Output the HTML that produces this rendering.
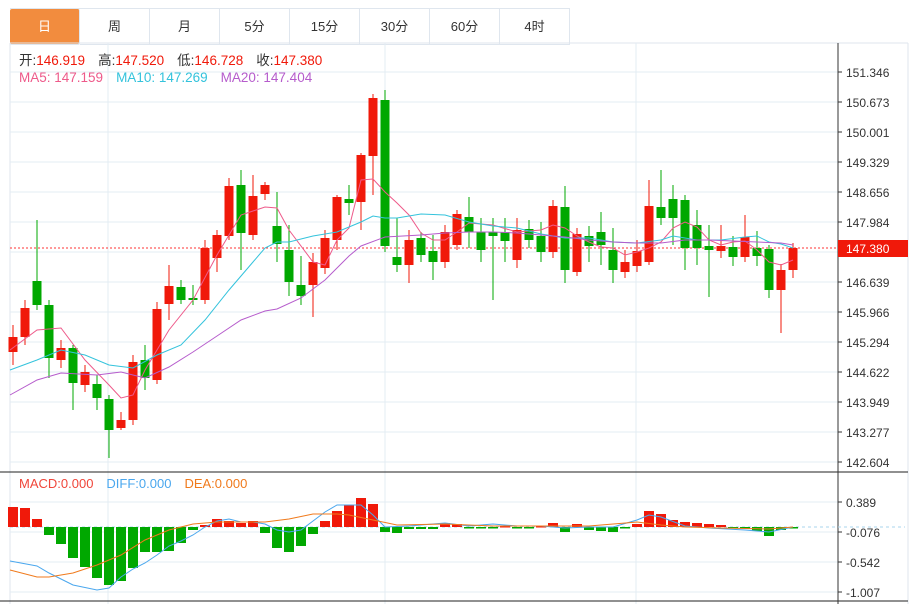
<!DOCTYPE html>
<html><head><meta charset="utf-8"><style>
body{margin:0;background:#fff;width:914px;height:604px;overflow:hidden;font-family:"Liberation Sans","Noto Sans CJK SC",sans-serif}
.tabs{position:absolute;left:10px;top:8px;height:35px;display:flex;border-top:1px solid #dfe6ee}
.tab{width:69px;height:35px;line-height:35px;text-align:center;font-size:13px;color:#333;border-right:1px solid #dfe6ee;border-bottom:1px solid #dfe6ee}
.tab.on{background:#f28c3e;color:#fff;border-radius:2px}
</style></head><body>
<div class="tabs"><div class="tab on">日</div><div class="tab">周</div><div class="tab">月</div><div class="tab">5分</div><div class="tab">15分</div><div class="tab">30分</div><div class="tab">60分</div><div class="tab">4时</div></div>
<svg id="s" width="914" height="604" style="position:absolute;left:0;top:0" font-family="Liberation Sans, Noto Sans CJK SC, sans-serif"></svg>
<script>
const s=document.getElementById('s');let h='';
h+='<line x1="10" y1="43" x2="10" y2="604" stroke="#dfe6ee"/><line x1="908" y1="43" x2="908" y2="604" stroke="#dfe6ee"/><line x1="10" y1="43" x2="908" y2="43" stroke="#dfe6ee"/>';
[72,102,132,162,192,222,252,282,312,342,372,402,432,462].forEach(y=>h+=`<line x1="10" y1="${y}" x2="838" y2="${y}" stroke="#e3ecf3"/>`);
[502,532,562,592].forEach(y=>h+=`<line x1="10" y1="${y}" x2="838" y2="${y}" stroke="#e3ecf3"/>`);
[108,385,636].forEach(x=>h+=`<line x1="${x}" y1="43" x2="${x}" y2="604" stroke="#e3ecf3"/>`);
h+='<line x1="0" y1="472" x2="908" y2="472" stroke="#222"/><line x1="0" y1="601" x2="908" y2="601" stroke="#222"/><line x1="838" y1="43" x2="838" y2="604" stroke="#333"/>';
const pl=['151.346','150.673','150.001','149.329','148.656','147.984','','146.639','145.966','145.294','144.622','143.949','143.277','142.604'];
pl.forEach((t,i)=>{if(t){const y=72+i*30;h+=`<line x1="838" y1="${y}" x2="842" y2="${y}" stroke="#333"/><text x="846" y="${y+5}" font-size="12" fill="#333">${t}</text>`}});
[['0.389',502],['-0.076',532],['-0.542',562],['-1.007',592]].forEach(a=>h+=`<line x1="838" y1="${a[1]}" x2="842" y2="${a[1]}" stroke="#333"/><text x="846" y="${a[1]+5}" font-size="12" fill="#333">${a[0]}</text>`);
h+='<line x1="10" y1="248" x2="838" y2="248" stroke="#f33" stroke-dasharray="2,2"/><rect x="838" y="240" width="70" height="17" fill="#f0190a"/><text x="846" y="253" font-size="12" fill="#fff">147.380</text>';
h+='<line x1="10" y1="527" x2="838" y2="527" stroke="#a9d4ec" stroke-dasharray="3,3"/>';
const R='#f0190a',G='#00a800';
const c=[[1,337,352,325,365],[1,308,337,300,345],[0,281,305,220,310],[0,305,358,300,378],[1,348,360,340,368],[0,348,383,345,410],[1,372,385,365,392],[0,384,398,375,410],[0,399,430,395,458],[1,420,428,412,430],[1,362,420,355,425],[0,360,378,345,390],[1,309,380,302,384],[1,286,304,265,320],[0,287,300,280,304],[0,298,300,285,305],[1,248,300,240,304],[1,235,258,230,272],[1,186,236,178,240],[0,185,233,170,270],[1,196,235,175,240],[1,185,194,182,200],[0,226,244,192,262],[0,250,282,225,296],[0,285,296,256,305],[1,262,285,253,317],[1,238,268,230,274],[1,197,240,195,250],[0,199,203,185,215],[1,155,202,153,230],[1,98,156,94,195],[0,100,246,90,252],[0,257,265,218,272],[1,240,265,230,283],[0,238,255,232,262],[0,251,262,235,280],[1,232,262,225,268],[1,214,245,210,250],[0,217,232,197,248],[0,232,250,218,262],[0,232,236,218,300],[0,232,241,218,262],[1,230,260,218,268],[0,229,240,220,248],[0,236,252,222,262],[1,206,252,200,258],[0,207,270,186,283],[1,234,272,228,276],[0,236,246,226,262],[0,232,245,212,265],[0,250,270,228,283],[1,262,272,250,278],[1,251,266,240,272],[1,206,262,180,265],[0,207,218,170,225],[0,199,218,185,245],[0,200,248,195,270],[0,225,248,210,265],[0,246,250,225,297],[1,246,251,225,258],[0,247,257,236,266],[1,237,257,215,262],[0,248,256,231,266],[0,249,290,245,298],[1,270,290,264,333],[1,248,270,243,278]];
c.forEach((d,i)=>{const x=13+i*12,col=d[0]?R:G;h+=`<line x1="${x}" y1="${d[3]}" x2="${x}" y2="${d[4]}" stroke="${col}"/><rect x="${x-4.5}" y="${d[1]}" width="9" height="${Math.max(2,d[2]-d[1])}" fill="${col}"/>`});
function pl2(pts,col){h+=`<polyline fill="none" stroke="${col}" stroke-width="1" points="${pts.map(p=>p[0]+','+p[1]).join(' ')}"/>`}
pl2([[10,350],[37,330],[61,328],[85,360],[109,385],[121,398],[133,395],[145,370],[169,330],[193,300],[217,255],[241,215],[265,207],[277,208],[289,230],[313,262],[325,265],[337,240],[349,228],[361,180],[373,179],[385,192],[397,203],[409,215],[421,233],[433,240],[445,240],[457,232],[469,223],[493,225],[517,232],[541,230],[553,225],[565,228],[577,236],[589,242],[601,247],[613,248],[625,255],[637,252],[649,248],[661,242],[673,228],[685,222],[697,227],[709,240],[721,245],[733,242],[745,241],[757,250],[769,262],[781,265],[793,260]],'#ee5a8a');
pl2([[10,370],[37,360],[61,350],[85,355],[109,365],[133,368],[157,355],[181,345],[205,320],[229,290],[253,262],[265,248],[277,242],[289,242],[313,236],[337,232],[361,222],[373,216],[385,218],[397,218],[421,214],[445,215],[469,222],[493,226],[517,228],[541,234],[565,238],[589,238],[613,242],[637,243],[661,240],[673,236],[697,240],[721,240],[745,237],[757,236],[769,242],[781,244],[793,248]],'#34c3dc');
pl2([[10,395],[37,380],[61,373],[97,375],[121,372],[145,378],[169,367],[193,352],[217,336],[241,320],[265,311],[277,309],[301,298],[325,280],[349,256],[361,246],[385,237],[421,235],[445,233],[469,232],[493,232],[517,233],[541,235],[565,237],[589,240],[613,242],[637,243],[661,243],[685,240],[709,240],[733,241],[757,242],[781,243],[793,245]],'#b65ccc');
const m=[507,508,519,535,544,558,567,578,585,581,568,552,552,551,543,530,525,519,521,523,521,533,548,552,546,534,521,511,505,498,504,532,533,529,529,529,523,524,528,527,527,526,527,528,526,523,532,524,530,531,532,527,524,511,514,520,522,523,524,525,527,527,531,536,530,527];
m.forEach((y,i)=>{const x=13+i*12;const up=y<527;h+=`<rect x="${x-5}" y="${Math.min(y,527)}" width="10" height="${Math.max(1.5,Math.abs(y-527))}" fill="${up?R:G}"/>`});
pl2([[10,561],[37,566],[49,573],[73,585],[97,590],[109,588],[121,577],[133,569],[145,563],[157,555],[169,546],[181,541],[193,535],[205,527],[217,521],[229,519],[241,522],[253,522],[265,524],[277,530],[289,532],[301,530],[325,512],[337,505],[349,505],[361,505],[373,515],[385,527],[409,526],[445,523],[469,526],[493,524],[517,526],[541,526],[565,528],[589,527],[613,527],[637,520],[649,515],[661,517],[685,526],[709,528],[745,530],[769,532],[793,527]],'#4aa7ee');
pl2([[10,570],[37,577],[49,577],[73,573],[97,565],[121,555],[145,540],[169,530],[193,524],[217,522],[241,522],[265,522],[289,519],[313,514],[337,514],[349,515],[373,520],[397,525],[445,524],[493,526],[541,526],[589,526],[637,522],[661,525],[685,527],[721,528],[769,529],[793,527]],'#f07a1c');
h+='<line x1="838" y1="527" x2="905" y2="527" stroke="#a9d4ec" stroke-dasharray="3,3"/>';
h+='<text x="19" y="65" font-size="13.5"><tspan fill="#333">开:</tspan><tspan fill="#f0190a">146.919</tspan><tspan fill="#333" dx="13">高:</tspan><tspan fill="#f0190a">147.520</tspan><tspan fill="#333" dx="13">低:</tspan><tspan fill="#f0190a">146.728</tspan><tspan fill="#333" dx="13">收:</tspan><tspan fill="#f0190a">147.380</tspan></text>';
h+='<text x="19" y="82" font-size="13.5"><tspan fill="#ee5a8a">MA5: 147.159</tspan><tspan fill="#34c3dc" dx="13">MA10: 147.269</tspan><tspan fill="#b65ccc" dx="13">MA20: 147.404</tspan></text>';
h+='<text x="19" y="488" font-size="13"><tspan fill="#f0463a">MACD:0.000</tspan><tspan fill="#4aa7ee" dx="13">DIFF:0.000</tspan><tspan fill="#f07a1c" dx="13">DEA:0.000</tspan></text>';
s.innerHTML=h;
</script>
</body></html>
